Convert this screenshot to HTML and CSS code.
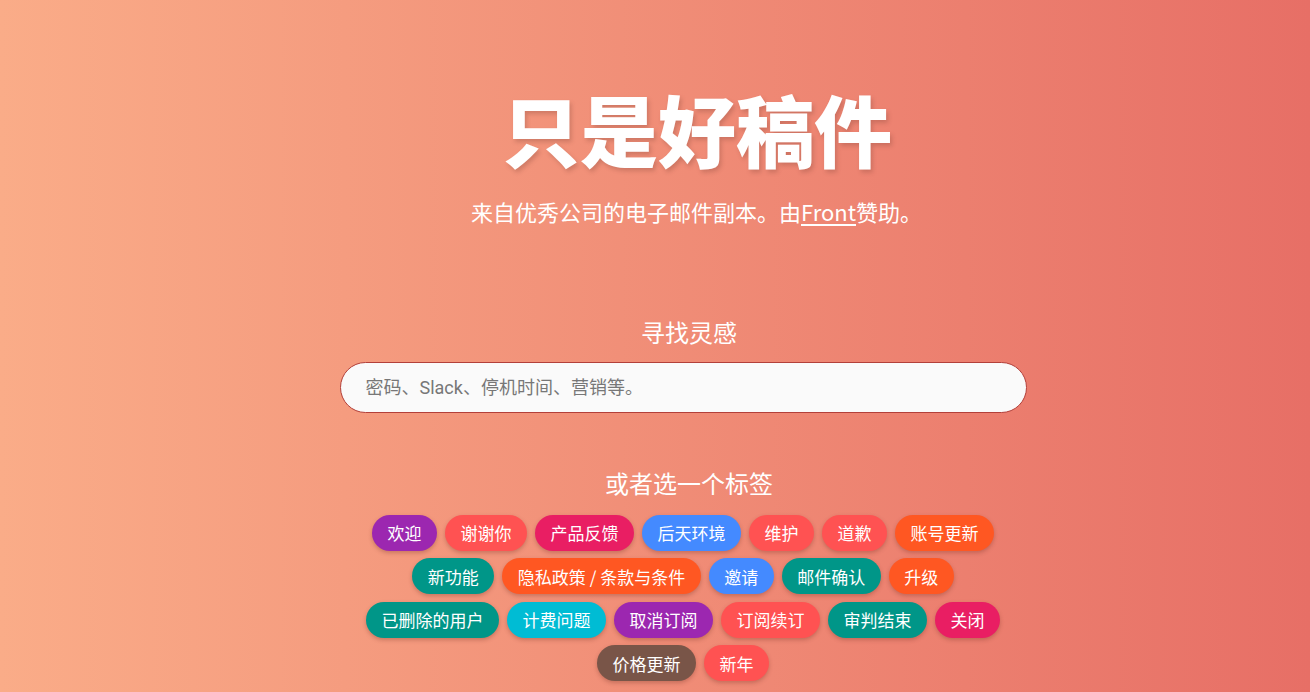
FILE: index.html
```html
<!DOCTYPE html>
<html lang="zh">
<head>
<meta charset="utf-8">
<title>只是好稿件</title>
<link rel="stylesheet" href="styles.css">
</head>
<body>
<div class="page">
  <header class="hero">
    <h1 class="title">只是好稿件</h1>
    <p class="subtitle">来自优秀公司的电子邮件副本。由<a class="sponsor" href="#">Front</a>赞助。</p>
  </header>
  <main class="main">
    <h2 class="heading heading-search">寻找灵感</h2>
    <input class="search" type="text" placeholder="密码、Slack、停机时间、营销等。">
    <h2 class="heading heading-tags">或者选一个标签</h2>
    <div class="tags">
      <a class="tag purple" href="#">欢迎</a>
      <a class="tag red" href="#">谢谢你</a>
      <a class="tag pink" href="#">产品反馈</a>
      <a class="tag blue" href="#">后天环境</a>
      <a class="tag red" href="#">维护</a>
      <a class="tag red" href="#">道歉</a>
      <a class="tag orange" href="#">账号更新</a>
      <a class="tag teal" href="#">新功能</a>
      <a class="tag orange" href="#">隐私政策 / 条款与条件</a>
      <a class="tag blue" href="#">邀请</a>
      <a class="tag teal" href="#">邮件确认</a>
      <a class="tag orange" href="#">升级</a>
      <a class="tag teal" href="#">已删除的用户</a>
      <a class="tag cyan" href="#">计费问题</a>
      <a class="tag purple" href="#">取消订阅</a>
      <a class="tag red" href="#">订阅续订</a>
      <a class="tag teal" href="#">审判结束</a>
      <a class="tag pink" href="#">关闭</a>
      <a class="tag brown" href="#">价格更新</a>
      <a class="tag red" href="#">新年</a>
    </div>
  </main>
</div>
</body>
</html>
```

FILE: styles.css
```css
html, body {
  margin: 0;
  padding: 0;
  height: 100%;
}

body {
  background: linear-gradient(to right, #faac88 0%, #e76f66 100%);
  font-family: "Noto Sans CJK SC", "Noto Sans", sans-serif;
  color: #ffffff;
  overflow: hidden;
}

.page {
  padding-left: 56px;
  display: flex;
  flex-direction: column;
  align-items: center;
}

.hero {
  display: flex;
  flex-direction: column;
  align-items: center;
  padding-top: 80px;
}

.title {
  margin: 0;
  padding-left: 28px;
  font-size: 78px;
  line-height: 96px;
  font-weight: 900;
  text-shadow: 2px 3px 4px rgba(120, 60, 50, 0.28);
}

.subtitle {
  margin: 19px 0 0;
  padding-left: 27px;
  font-size: 22px;
  line-height: 32px;
}

.sponsor {
  color: #ffffff;
  text-decoration: underline;
  text-underline-offset: 3px;
}

.main {
  width: 687px;
  display: flex;
  flex-direction: column;
  align-items: center;
}

.heading {
  margin: 0;
  font-size: 24px;
  line-height: 34px;
  font-weight: 400;
  padding-left: 12px;
}

.heading-search {
  margin-top: 88px;
}

.heading-tags {
  margin-top: 53px;
}

.search {
  box-sizing: border-box;
  width: 687px;
  height: 51px;
  margin-top: 13px;
  padding: 0 25px;
  border: 1px solid #b3403a;
  border-radius: 26px;
  background: #fafafa;
  font-family: "Roboto", "Noto Sans CJK SC", sans-serif;
  font-size: 18px;
  color: #333333;
  outline: none;
}

.search::placeholder {
  color: #777777;
}

.tags {
  margin-top: 11px;
  display: flex;
  flex-wrap: wrap;
  justify-content: center;
}

.tag {
  display: inline-flex;
  align-items: center;
  height: 36px;
  padding: 0 15.5px;
  margin: 3.75px 4px;
  border-radius: 18px;
  font-size: 17px;
  font-weight: 400;
  color: #ffffff;
  text-decoration: none;
  white-space: nowrap;
  box-shadow: 0 2px 4px rgba(100, 40, 30, 0.3);
}

.purple { background: #9c27b0; }
.red { background: #ff5252; }
.pink { background: #e91e63; }
.blue { background: #448aff; }
.orange { background: #ff5722; }
.teal { background: #009688; }
.cyan { background: #00bcd4; }
.brown { background: #795548; }
```
